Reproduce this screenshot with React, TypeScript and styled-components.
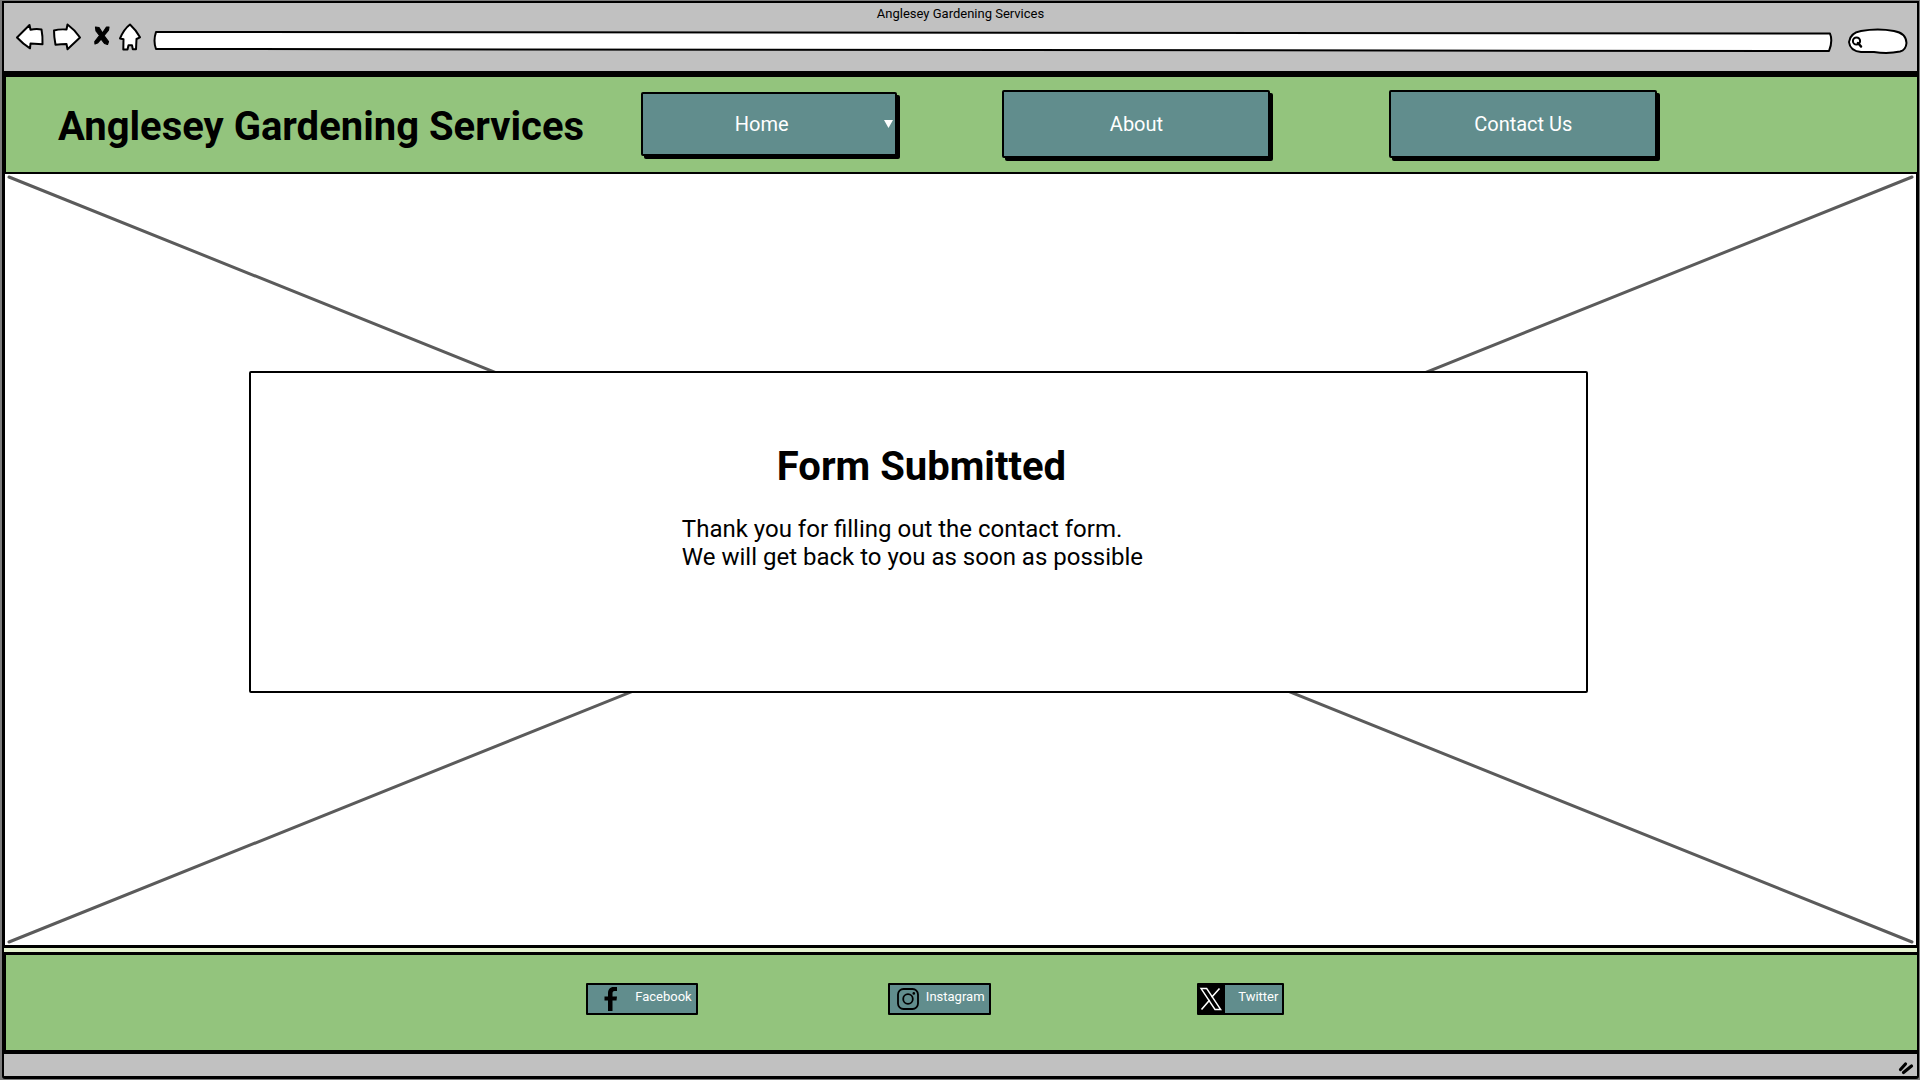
import React from 'react';
import styled, { createGlobalStyle } from 'styled-components';

const ink = '#000';
const chromeGrey = '#c1c1c1';
const leaf = '#93c47d';
const teal = '#618d8d';

const GlobalStyle = createGlobalStyle`
  *, *::before, *::after { box-sizing: border-box; }
  body {
    margin: 0;
    background: #7c7c7c;
    color: ${ink};
    font-family: Roboto, "Liberation Sans", sans-serif;
  }
`;

const Page = styled.div`
  min-height: 100vh;
  padding: 1px 1px 1px 2px;
  display: flex;
`;

const Window = styled.div`
  flex: 1;
  display: flex;
  flex-direction: column;
  border: 2px solid ${ink};
  border-bottom-width: 3px;
  border-radius: 0 0 3px 3px;
  background: ${chromeGrey};
`;

/* Browser chrome */
const Chrome = styled.div`
  border-bottom: 3px solid ${ink};
  padding-bottom: 17px;
`;

const WindowTitle = styled.div`
  padding-top: 1px;
  font-size: 13px;
  line-height: 20px;
  text-align: center;
`;

const Toolbar = styled.div`
  display: flex;
  align-items: flex-start;
  gap: 9px;
  height: 30px;
  padding: 0 9px 0 12px;
`;

const ToolButton = styled.button<{ $width: number }>`
  flex: none;
  width: ${p => p.$width}px;
  height: 28px;
  padding: 0;
  border: 0;
  background: none;
  cursor: pointer;

  svg {
    display: block;
    width: 100%;
    height: 100%;
  }
`;

const Sketch = styled.svg`
  display: block;
  fill: #fff;
  stroke: ${ink};
  stroke-width: 2;
  stroke-linejoin: round;
  stroke-linecap: round;
  overflow: visible;
`;

const FieldStack = styled.label`
  display: grid;

  > * {
    grid-area: 1 / 1;
    width: 100%;
    height: 100%;
    min-width: 0;
  }
`;

const Address = styled(FieldStack)`
  flex: 1;
  height: 20px;
  margin: 7px 7px 0 4px;
`;

const Search = styled(FieldStack)`
  flex: none;
  width: 60px;
  height: 26px;
  margin-top: 4px;
`;

const Field = styled.input`
  z-index: 1;
  border: 0;
  outline: 0;
  padding: 0 16px;
  background: transparent;
  font: inherit;
  font-size: 13px;
`;

/* Site */
const Header = styled.header`
  display: grid;
  grid-template-columns: 583fr 362fr 387fr 528fr;
  align-items: center;
  height: 100px;
  padding: 0 0 2px 52px;
  border: solid ${ink};
  border-width: 3px 0 2px 2px;
  background: ${leaf};
`;

const Brand = styled.h1`
  margin: 0;
  padding-top: 6px;
  font-size: 40px;
  line-height: 48px;
  font-weight: 700;
  white-space: nowrap;
`;

const navBox = `
  height: 68px;
  border: 2px solid ${ink};
  border-radius: 2px;
  box-shadow: 3px 3px 0 ${ink};
  background: ${teal};
  color: #fff;
  font-size: 20px;
`;

const NavLink = styled.a`
  ${navBox}
  display: flex;
  align-items: center;
  justify-content: center;
  width: 268px;
  text-decoration: none;
`;

const NavMenu = styled.label`
  ${navBox}
  display: grid;
  align-items: center;
  width: 256px;
  height: 64px;

  > * {
    grid-area: 1 / 1;
  }

  svg {
    justify-self: end;
    margin-right: 2px;
    pointer-events: none;
    fill: #fff;
  }
`;

const NavSelect = styled.select`
  width: 100%;
  height: 100%;
  padding: 0 14px 0 0;
  border: 0;
  outline: 0;
  appearance: none;
  background: transparent;
  color: inherit;
  font: inherit;
  text-align: center;
  text-align-last: center;
`;

const Main = styled.main`
  flex: 1;
  position: relative;
  display: grid;
  grid-template-rows: 197fr auto 252fr;
  border: solid ${ink};
  border-width: 0 1px 3px 1px;
  background: #fff;
`;

const Placeholder = styled.svg`
  position: absolute;
  inset: 1px 2px;
  width: calc(100% - 4px);
  height: calc(100% - 2px);
  stroke: #5b5b5b;
  stroke-width: 3;
  stroke-linecap: round;
`;

const Card = styled.section`
  position: relative;
  grid-row: 2;
  display: flex;
  flex-direction: column;
  align-items: center;
  width: 70.1%;
  margin-left: 12.75%;
  padding: 70px 0 120px;
  border: 2px solid ${ink};
  border-radius: 2px;
  background: #fff;
`;

const CardTitle = styled.h2`
  margin: 0 0 24px;
  padding-left: 6px;
  font-size: 40px;
  line-height: 48px;
  font-weight: 700;
`;

const Message = styled.p`
  margin: 0;
  padding-right: 12px;
  font-size: 24px;
  line-height: 28px;
`;

const Strip = styled.div`
  height: 4px;
  background: #e4f2cf;
`;

const Footer = styled.footer`
  display: grid;
  grid-template-columns: 580fr 302fr 310fr 720fr;
  height: 102px;
  padding-top: 28px;
  border: solid ${ink};
  border-width: 3px 0 4px 2px;
  background: ${leaf};
`;

const SocialLink = styled.a<{ $width: number; $inset: number }>`
  display: flex;
  justify-content: space-between;
  width: ${p => p.$width}px;
  height: 32px;
  padding: 0 4px 0 ${p => p.$inset}px;
  border: 2px solid ${ink};
  border-radius: 1px;
  background: ${teal};
  color: #fff;
  font-size: 13px;
  line-height: 24px;
  text-decoration: none;

  &:first-of-type {
    grid-column: 2;
  }

  svg {
    display: block;
    flex: none;
  }
`;

const StatusBar = styled.div`
  display: flex;
  align-items: flex-end;
  justify-content: flex-end;
  height: 22px;
  padding: 0 3px 1px 0;
`;

function Facebook() {
  return (
    <svg width="14" height="28" viewBox="0 0 14 28" aria-hidden="true">
      <path d="M4 26V15.500H0.500V11.500H4V8.500C4 4.500 6 2 9.500 2H13V6H10.500C9 6 8.500 7 8.500 8.500V11.500H13L12.500 15.500H8.500V26Z" fill={ink} />
    </svg>
  );
}

function Instagram() {
  return (
    <svg width="22" height="28" viewBox="0 0 22 28" fill="none" stroke={ink} strokeWidth="1.8" aria-hidden="true">
      <rect x="1" y="4" width="20" height="20" rx="5.500" />
      <circle cx="11" cy="14" r="4.800" />
      <circle cx="16.800" cy="8.400" r="1.300" fill={ink} stroke="none" />
    </svg>
  );
}

function Twitter() {
  return (
    <svg width="26" height="28" viewBox="0 0 26 28" aria-hidden="true">
      <path d="M0 0H26V28H0Z" fill={ink} />
      <path d="M2 3.500H7.700L21.700 24.500H16Z" fill={ink} stroke="#fff" strokeWidth="1.400" />
      <path d="M20.500 3.500L12.700 12.200M10.700 15L2.500 24.500" fill="none" stroke="#fff" strokeWidth="1.600" />
    </svg>
  );
}

export default function App() {
  return (
    <Page>
      <GlobalStyle />
      <Window>
        <Chrome>
          <WindowTitle>Anglesey Gardening Services</WindowTitle>
          <Toolbar>
            <ToolButton $width={28} aria-label="Back">
              <Sketch viewBox="0 0 28 28">
                <path d="M1 13.500L13.500 1L14.500 5.800Q20 4.500 25.500 5.500Q26.800 12 26.500 20.200L14.500 19.500L14 24.300Q7 20 1 13.500Z" />
              </Sketch>
            </ToolButton>
            <ToolButton $width={28} aria-label="Forward">
              <Sketch viewBox="0 0 28 28">
                <path d="M1 6.500Q6 5 13.500 5.500L14.500 0.500Q22 6 27 13.500L14.500 25.300L13.500 20Q8 20 2.500 20.800Q1 13 1 6.500Z" />
              </Sketch>
            </ToolButton>
            <ToolButton $width={20} aria-label="Stop">
              <Sketch viewBox="0 0 20 28">
                <path d="M5.500 3L9 3.500L12.500 9L16.500 3L19 3L18.500 6L14 11.500L18.500 17.500L17.500 20.500L14.500 19.500L11 15L7.500 19L5 20L4.800 17.500L9.500 11.500L6 7Z" fill={ink} strokeWidth="1.200" />
              </Sketch>
            </ToolButton>
            <ToolButton $width={22} aria-label="Home page">
              <Sketch viewBox="0 0 22 28">
                <path d="M11 0.500Q17 6 21 13.300L17.500 15L17 25.300L13.800 25.300L13 21.300L9.500 21.300L8.500 25.500L4.300 25.500L4.500 15.300L1 14.500Q5 5 11 0.500Z" />
              </Sketch>
            </ToolButton>
            <Address>
              <Sketch viewBox="0 0 1678 20" preserveAspectRatio="none" aria-hidden="true">
                <path d="M2 1L1676 2.500Q1679 10 1675 20L2 18Q-1 10 2 1Z" vectorEffect="non-scaling-stroke" />
              </Sketch>
              <Field type="text" aria-label="Address" />
            </Address>
            <Search>
              <Sketch viewBox="0 0 60 26" aria-hidden="true">
                <path d="M13 3Q30 0 46 3Q58 5 58.500 15Q58 22 52 23.500Q40 26 26 24H13Q2 23 1 14Q2 5 13 3Z" />
                <circle cx="8.500" cy="13" r="3.600" fill="none" />
                <path d="M10 15L13 18.500" fill="none" strokeWidth="2.500" />
              </Sketch>
              <Field type="text" aria-label="Search" />
            </Search>
          </Toolbar>
        </Chrome>

        <Header>
          <Brand>Anglesey Gardening Services</Brand>
          <NavMenu>
            <NavSelect aria-label="Home menu" defaultValue="Home">
              <option>Home</option>
            </NavSelect>
            <svg width="9" height="9" viewBox="0 0 9 9" aria-hidden="true">
              <path d="M0 1H9L4.500 9Z" />
            </svg>
          </NavMenu>
          <NavLink href="#about">About</NavLink>
          <NavLink href="#contact">Contact Us</NavLink>
        </Header>

        <Main>
          <Placeholder viewBox="0 0 1907 769" preserveAspectRatio="none" aria-hidden="true">
            <path d="M2 2L1905 767M1905 2L2 767" vectorEffect="non-scaling-stroke" />
          </Placeholder>
          <Card>
            <CardTitle>Form Submitted</CardTitle>
            <Message>
              Thank you for filling out the contact form.
              <br />
              We will get back to you as soon as possible
            </Message>
          </Card>
        </Main>

        <Strip />

        <Footer>
          <SocialLink href="#facebook" $width={112} $inset={16}>
            <Facebook />
            Facebook
          </SocialLink>
          <SocialLink href="#instagram" $width={103} $inset={7}>
            <Instagram />
            Instagram
          </SocialLink>
          <SocialLink href="#twitter" $width={87} $inset={0}>
            <Twitter />
            Twitter
          </SocialLink>
        </Footer>

        <StatusBar>
          <svg width="16" height="14" viewBox="0 0 16 14" stroke={ink} strokeWidth="3.200" strokeLinecap="round" aria-hidden="true">
            <path d="M2.500 8.500L7.500 3M5.500 11.500L13.500 5" />
          </svg>
        </StatusBar>
      </Window>
    </Page>
  );
}
